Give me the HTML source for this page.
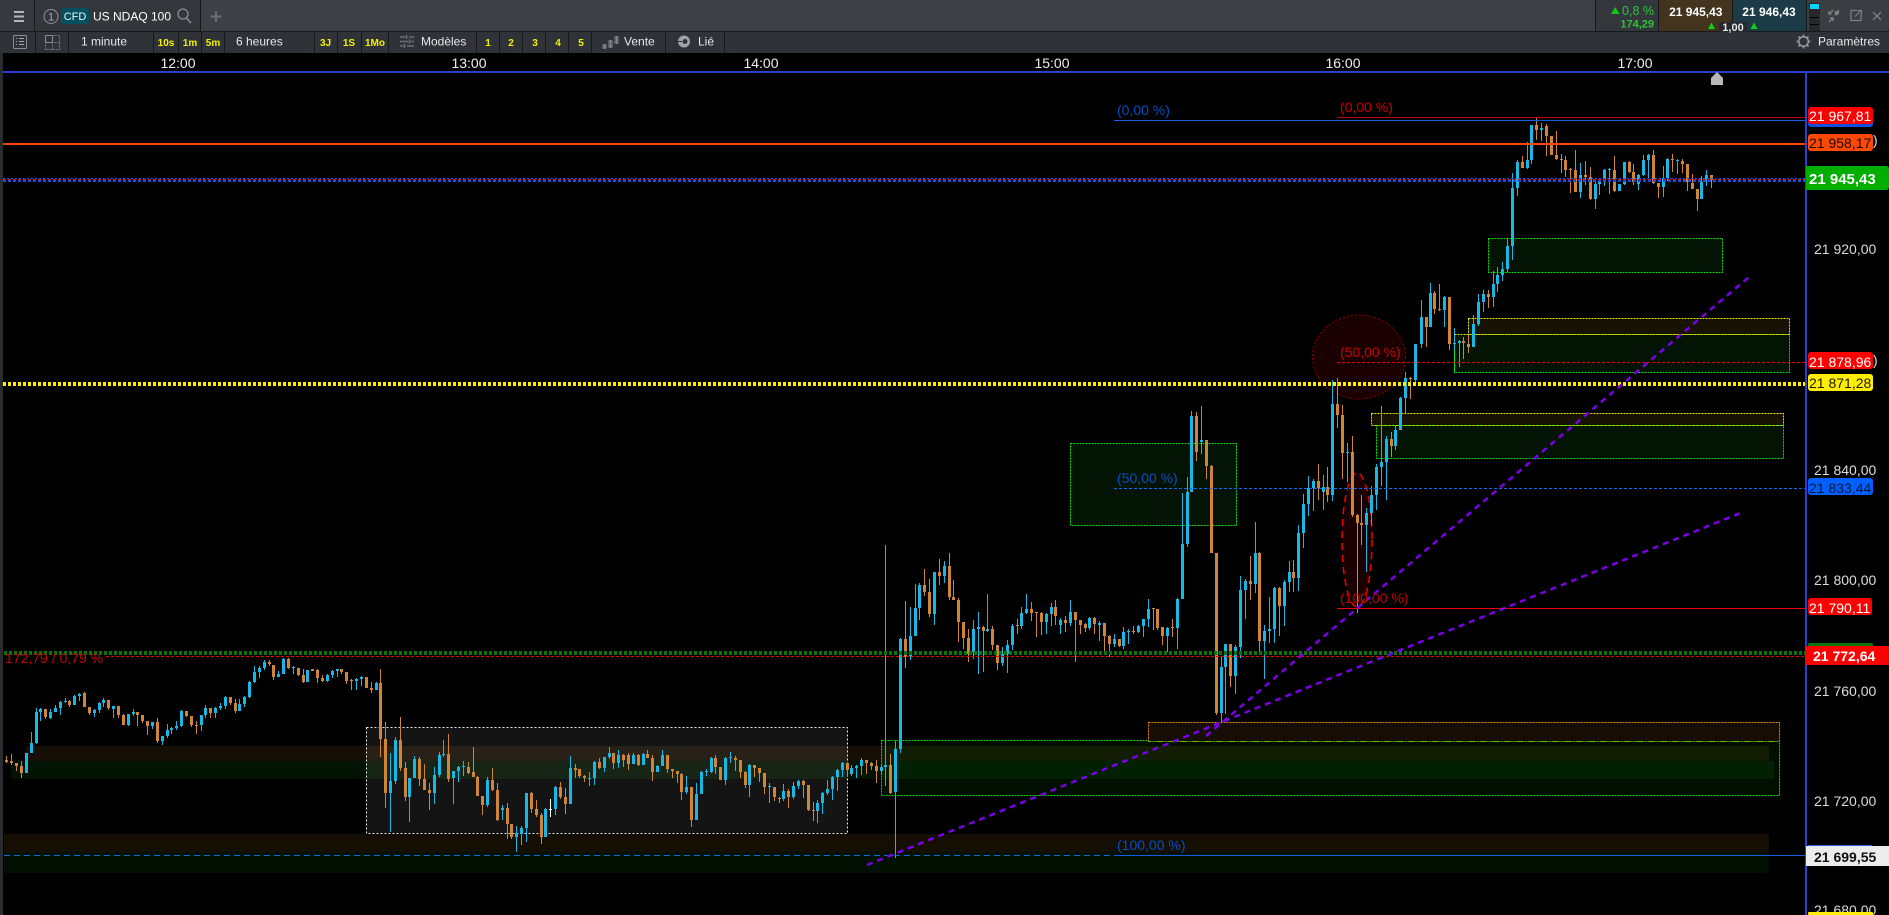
<!DOCTYPE html>
<html lang="fr"><head><meta charset="utf-8"><title>US NDAQ 100</title>
<style>
html,body{margin:0;padding:0;background:#000;width:1889px;height:915px;overflow:hidden}
svg{display:block;position:absolute;left:0;top:0}
text{font-family:"Liberation Sans",sans-serif}
.t{fill:#e6e8ea;font-size:12px}
.y{fill:#f5f000;font-size:10px;font-weight:bold;text-anchor:middle}
.h{fill:#f0f0f0;font-size:14px;text-anchor:middle}
.p{fill:#dcdcdc;font-size:14px}
.l{font-size:14px}
.r{fill:#c80000;font-size:14px}
.b{fill:#0050c4;font-size:14px}
</style></head><body>
<svg width="1889" height="915" viewBox="0 0 1889 915" xmlns="http://www.w3.org/2000/svg">
<rect width="1889" height="915" fill="#000"/>
<!-- top row -->
<rect width="1889" height="32" fill="#3d4045"/>
<rect width="34" height="31" fill="#363a3f"/>
<rect x="35" width="165" height="31" fill="#33363b"/>
<rect x="1596" width="62" height="31" fill="#33373c"/>
<rect x="1659" width="73" height="31" fill="#43341f"/>
<rect x="1733" width="73" height="31" fill="#1b3b47"/>
<rect x="1807" width="82" height="31" fill="#3a3d42"/>
<rect x="1809" y="3" width="11" height="28" fill="#26282c"/>
<rect x="1810" y="4" width="9" height="5" fill="#00d8ff"/>
<path d="M1810 17.500h9M1810 24.500h9" stroke="#000" stroke-width="1"/>
<path d="M34.500 0V31M200.500 0V31M1595.500 0V31M1658.500 0V31M1732.500 0V31M1806.500 0V31" stroke="#17191b"/>
<rect y="31" width="1889" height="1" fill="#17191b"/>
<!-- row 2 -->
<rect y="32" width="1889" height="21" fill="#2f3338"/>
<path d="M35.500 32V53M68.500 32V53M153.500 32V53M178.500 32V53M201.500 32V53M224.500 32V53M314.500 32V53M337.500 32V53M361.500 32V53M388.500 32V53M476.500 32V53M499.500 32V53M522.500 32V53M545.500 32V53M568.500 32V53M591.500 32V53M665.500 32V53M724.500 32V53" stroke="#17191b"/>
<!-- top icons -->
<path d="M14 12h10M14 16.500h10M14 21h10" stroke="#b4b6b8" stroke-width="2"/>
<circle cx="51" cy="16.500" r="7" fill="none" stroke="#8f9294" stroke-width="1"/>
<text x="51" y="20.500" font-size="11" fill="#a8aaac" text-anchor="middle">1</text>
<rect x="61" y="8" width="28" height="16" rx="3" fill="#04505c"/>
<text x="75" y="20" font-size="11" fill="#e8f4f6" text-anchor="middle">CFD</text>
<text x="93" y="20.500" fill="#fff" style="font-size:12px">US NDAQ 100</text>
<circle cx="183" cy="14" r="5" fill="none" stroke="#8a8c8e" stroke-width="1.300"/>
<path d="M186.500 18l4.500 5" stroke="#8a8c8e" stroke-width="1.500"/>
<path d="M216 11v11M210.500 16.500h11" stroke="#6c6f72" stroke-width="2"/>
<!-- row2 icons -->
<rect x="13.500" y="35.500" width="13" height="13" rx="1" fill="none" stroke="#8b8e91"/>
<path d="M16 38.500h1M16 41.500h1M16 44.500h1M19 38.500h5M19 41.500h5M19 44.500h5" stroke="#a0a3a5"/>
<path d="M45.500 35.500h14v14h-14zM52.500 35.500v14M45.500 42.500h14" fill="none" stroke="#74777a" stroke-dasharray="2 1"/>
<path d="M45.500 35.500h7v7h-7z" fill="none" stroke="#8b8e91"/>
<path d="M400 37h5M409 37h5M400 41.500h8M411 41.500h3M400 46h3M407 46h7M406.500 35v4M409.500 39.500v4M404.500 44v4" stroke="#6f7275" stroke-width="1.500" fill="none"/>
<path d="M604.500 44v5M610.500 40v8M616.500 36v8" stroke="#8a8d90"/>
<rect x="603" y="45" width="3" height="3" fill="none" stroke="#8a8d90"/>
<rect x="609" y="41" width="3" height="6" fill="none" stroke="#8a8d90"/>
<rect x="615" y="37" width="3" height="6" fill="none" stroke="#8a8d90"/>
<circle cx="684" cy="41.500" r="6" fill="#a0a3a5"/>
<circle cx="685" cy="41.500" r="2.500" fill="#2f3338"/>
<path d="M677 41.500h5" stroke="#2f3338" stroke-width="1"/>
<!-- toolbar text -->
<text x="81" y="45.500" class="t">1 minute</text>
<text x="236" y="45.500" class="t">6 heures</text>
<text x="421" y="45.500" class="t">Modèles</text>
<text x="624" y="45.500" class="t">Vente</text>
<text x="698" y="45.500" class="t">Lié</text>
<text x="166" y="46" class="y">10s</text><text x="190" y="46" class="y">1m</text><text x="213" y="46" class="y">5m</text>
<text x="325.500" y="46" class="y">3J</text><text x="349" y="46" class="y">1S</text><text x="375" y="46" class="y">1Mo</text>
<text x="488" y="46" class="y">1</text><text x="511" y="46" class="y">2</text><text x="535" y="46" class="y">3</text><text x="558" y="46" class="y">4</text><text x="581" y="46" class="y">5</text>
<!-- right of toolbar -->
<circle cx="1803.500" cy="41.500" r="4.800" fill="none" stroke="#9a9da0" stroke-width="1.500"/>
<path d="M1803.500 34.500v2M1803.500 46.500v2M1796.500 41.500h2M1808.500 41.500h2M1798.500 36.500l1.500 1.500M1807 45l1.500 1.500M1808.500 36.500l-1.500 1.500M1800 45l-1.500 1.500" stroke="#9a9da0" stroke-width="1.500"/>
<text x="1818" y="45.500" class="t">Paramètres</text>
<path d="M1611 14l4.300-7 4.300 7z" fill="#17c417"/>
<text x="1654" y="15" fill="#2ec43a" text-anchor="end" style="font-size:12.500px">0,8 %</text>
<text x="1654" y="27.500" fill="#2ec43a" text-anchor="end" style="font-weight:bold;font-size:11px">174,29</text>
<text x="1695.800" y="16" fill="#fff" font-size="12" font-weight="bold" text-anchor="middle">21 945,43</text>
<text x="1769" y="16" fill="#fff" font-size="12" font-weight="bold" text-anchor="middle">21 946,43</text>
<path d="M1708 29l3.500-6.500 3.500 6.500zM1750.500 29l3.500-6.500 3.500 6.500z" fill="#12d012"/>
<path d="M1719 32V23q0-1 1-1h26q1 0 1 1v9z" fill="#25282c"/>
<text x="1733" y="31" fill="#e8e8e8" font-size="11" font-weight="bold" text-anchor="middle">1,00</text>
<path d="M1829 14l4-4m-4 1.500v2.500h2.500M1839 10l-4 4m3.500 0h-3v-3M1829 22l4-4m-3 0h3v3M1839 12l-3.500 3.500" fill="none" stroke="#7d8083" stroke-width="1.500"/>
<path d="M1861 14v6.500h-10v-10h6M1855 16.500l6-6m-3.500 0h4v4" fill="none" stroke="#7d8083" stroke-width="1.200"/>
<path d="M1873 12l8 8M1881 12l-8 8" stroke="#7d8083" stroke-width="1.300"/>
<!-- time axis -->
<text x="178" y="68" class="h">12:00</text><text x="469" y="68" class="h">13:00</text><text x="761" y="68" class="h">14:00</text>
<text x="1052" y="68" class="h">15:00</text><text x="1343" y="68" class="h">16:00</text><text x="1635" y="68" class="h">17:00</text>
<rect y="53" width="3" height="862" fill="#2b2c30"/>
<!-- bands -->
<rect x="26" y="746" width="1743" height="15" fill="#150f05"/>
<rect x="11" y="761" width="1763" height="18" fill="#031303"/>
<rect x="4" y="834" width="1765" height="18" fill="#150e03"/>
<rect x="4" y="852" width="1765" height="21" fill="#021002"/>
<!-- zones -->
<rect x="366.500" y="727.500" width="481" height="106" fill="#fff" fill-opacity=".08" stroke="#e8e8e8" stroke-dasharray="2 2"/>
<rect x="881.500" y="740.500" width="898" height="55" fill="#0f0" fill-opacity=".06"/>
<rect x="881.500" y="740.500" width="898" height="55" fill="none" stroke="#10dc10" stroke-dasharray="2 1"/>
<rect x="1148.500" y="722.500" width="631" height="19" fill="#160e04" stroke="#e88a00" stroke-dasharray="2 1"/>
<path d="M1148.500 741.500H1779.500" stroke="#10dc10" stroke-dasharray="2 2"/>
<rect x="1070.500" y="443.500" width="166" height="82" fill="#041404" stroke="#10dc10" stroke-dasharray="2 1"/>
<rect x="1488.500" y="238.500" width="234" height="34" fill="#041404" stroke="#10dc10" stroke-dasharray="2 1"/>
<rect x="1468.500" y="318.500" width="321" height="16" fill="#181204" stroke="#e6e600" stroke-dasharray="2 1"/>
<rect x="1454.500" y="334.500" width="335" height="38" fill="#041404" stroke="#10dc10" stroke-dasharray="2 1"/>
<path d="M1454.500 334.500H1789.500" stroke="#d8f000" stroke-dasharray="2 1"/>
<path d="M1454.500 334V373" stroke="#10e040"/>
<rect x="1371.500" y="413.500" width="412" height="12" fill="#181204" stroke="#e6e600" stroke-dasharray="2 1"/>
<rect x="1376.500" y="425.500" width="407" height="33" fill="#041404" stroke="#10dc10" stroke-dasharray="2 1"/>
<path d="M1376.500 425.500H1783.500" stroke="#a8f000" stroke-dasharray="2 2"/>
<ellipse cx="1359" cy="357" rx="46.500" ry="42" fill="#1a0000" stroke="#8c0000" stroke-dasharray="2 2"/>
<ellipse cx="1357" cy="540" rx="15" ry="67" fill="#1a0000" stroke="#f00000" stroke-width="1.500" stroke-dasharray="7 5"/>
<!-- candles -->
<g transform="translate(.5 0)" fill="none">
<path stroke="#cf8436" d="M6 756V763M11 754V765M16 763V771M21 761V778M45 709V719M69 700V707M84 692V707M89 707V715M108 700V710M118 706V718M123 714V725M137 712V726M142 715V723M147 721V735M157 718V743M186 711V717M191 716V727M196 721V734M210 708V718M230 697V705M235 699V713M269 660V666M273 665V680M288 658V669M298 668V676M303 669V683M312 669V671M317 669V683M322 675V682M341 669V674M346 672V684M351 679V690M366 677V688M371 682V693M380 669V757M385 722V808M400 717V771M405 762V801M419 757V786M424 764V790M429 783V810M448 734V782M468 762V774M473 747V777M477 776V796M482 796V815M492 768V791M497 783V821M507 803V839M511 824V839M531 792V813M536 800V817M541 813V844M560 782V799M565 788V814M575 764V778M579 769V778M584 775V782M599 758V769M613 753V769M623 754V767M628 753V770M638 754V766M647 750V758M652 755V781M667 755V773M672 769V778M677 771V783M681 773V800M691 787V827M715 755V774M720 767V780M735 756V771M740 760V778M745 771V788M754 765V777M759 768V782M764 773V794M774 787V801M779 797V803M788 789V808M803 780V798M808 785V811M813 802V821M847 763V776M866 760V774M871 762V770M876 760V783M890 754V794M905 601V668M924 569V596M929 579V617M939 559V585M949 553V600M953 580V600M958 598V642M963 622V649M968 629V662M983 626V672M992 626V650M997 645V670M1017 619V634M1031 602V621M1036 612V637M1041 612V635M1055 600V625M1065 616V632M1075 612V662M1080 620V634M1085 623V632M1094 617V634M1104 623V651M1109 635V657M1119 639V647M1133 626V634M1153 608V630M1157 609V630M1162 627V645M1172 619V637M1196 412V461M1206 440V479M1211 465V553M1216 553V715M1230 644V687M1250 556V600M1259 552V655M1279 587V636M1293 560V592M1318 464V500M1327 467V502M1337 378V428M1342 405V479M1352 436V517M1357 514V613M1361 495V545M1391 432V457M1410 377V399M1426 317V347M1434 291V314M1439 284V311M1449 297V350M1463 337V359M1468 334V353M1488 290V308M1522 156V168M1536 118V140M1546 124V156M1551 136V155M1556 131V160M1561 154V173M1565 156V177M1570 168V193M1575 150V192M1585 161V185M1590 167V200M1614 156V192M1629 161V173M1633 164V185M1653 150V184M1658 183V198M1672 154V172M1682 159V173M1687 164V191M1692 174V189M1697 189V211M1711 175V188"/>
<path stroke="#cf8436" stroke-width="3" d="M6 760V762M11 761V763M16 763V766M21 766V773M45 709V717M69 701V705M84 693V707M89 707V713M108 700V708M118 706V715M123 715V725M137 712V715M142 715V721M147 721V726M157 722V741M186 711V716M191 716V725M196 725V726M210 708V713M230 697V703M235 703V711M269 662V664M273 665V677M288 659V668M298 668V675M303 675V682M312 669V671M317 670V678M322 678V681M341 669V672M346 672V681M351 680V681M366 677V688M371 688V690M380 683V739M385 739V793M400 740V768M405 768V797M419 759V779M424 779V790M429 790V793M448 754V779M468 767V773M473 772V777M477 777V796M482 796V805M492 780V790M497 790V820M507 808V824M511 824V837M531 793V809M536 809V815M541 815V837M560 787V797M565 797V804M575 768V770M579 769V776M584 776V778M599 762V768M613 753V763M623 755V760M628 755V764M638 755V765M647 754V758M652 758V772M667 755V769M672 769V771M677 771V774M681 774V792M691 787V820M715 758V767M720 767V780M735 758V760M740 760V772M745 772V785M754 765V768M759 768V773M764 773V787M774 787V797M779 798V799M788 791V797M803 781V785M808 785V810M813 810V811M847 763V770M866 760V763M871 763V766M876 766V771M890 765V793M905 639V657M924 585V592M929 592V614M939 572V576M949 566V597M953 597V600M958 600V622M963 622V638M968 638V654M983 627V631M992 629V645M997 645V663M1017 625V626M1031 609V613M1036 612V613M1041 613V622M1055 607V616M1065 620V623M1075 612V620M1080 620V625M1085 624V628M1094 618V624M1104 623V636M1109 636V644M1119 639V646M1133 631V632M1153 608V609M1157 609V628M1162 627V636M1172 627V628M1196 416V452M1206 440V466M1211 466V553M1216 553V713M1230 644V676M1250 581V584M1259 553V641M1279 588V606M1293 572V578M1318 481V488M1327 487V495M1337 404V415M1342 415V453M1352 452V515M1357 515V523M1361 523V525M1391 439V446M1410 378V379M1426 317V327M1434 293V309M1439 309V310M1449 297V344M1463 341V343M1468 344V347M1488 294V297M1522 162V168M1536 125V130M1546 126V136M1551 136V155M1556 155V159M1561 159V160M1565 160V170M1570 169V170M1575 170V192M1585 175V177M1590 177V199M1614 170V191M1629 162V172M1633 172V182M1653 155V183M1658 183V187M1672 159V160M1682 161V164M1687 164V182M1692 183V189M1697 189V199M1711 175V180"/>
<path stroke="#18b8e6" d="M26 753V773M31 732V753M36 708V744M40 708V721M50 709V719M55 705V712M60 701V715M65 698V703M74 695V705M79 693V701M94 709V717M99 702V713M103 698V707M113 706V718M128 714V726M133 709V716M152 722V729M162 736V745M167 724V738M171 727V734M176 721V730M181 710V727M201 715V731M205 705V718M215 707V718M220 703V710M225 696V709M239 699V711M244 696V707M249 681V698M254 666V683M259 666V678M264 660V670M278 671V677M283 658V674M293 666V674M307 670V682M327 674V682M332 670V678M337 669V677M356 678V690M361 676V686M376 682V690M390 753V832M395 737V784M409 778V822M414 756V778M434 767V804M439 752V777M443 740V757M453 771V804M458 766V782M463 761V776M487 777V807M502 805V820M516 826V852M521 826V845M526 793V842M545 808V837M555 786V815M570 756V804M589 772V786M594 761V785M604 757V772M609 747V759M618 750V768M633 753V764M643 753V765M657 765V772M662 750V766M686 776V794M696 783V820M701 771V794M706 769V776M711 757V773M725 757V785M730 752V763M749 764V797M769 783V803M783 784V801M793 782V799M798 780V789M817 800V823M822 792V814M827 780V795M832 776V800M837 769V791M842 762V777M851 765V776M856 765V778M861 758V775M881 765V775M885 545V786M895 741V858M900 638V753M910 607V660M915 584V636M919 583V620M934 572V625M944 561V583M973 620V659M978 612V674M987 594V632M1002 647V666M1007 640V673M1012 624V650M1021 607V629M1026 594V614M1046 613V634M1051 603V626M1060 618V634M1070 600V626M1089 617V630M1099 621V641M1114 634V647M1123 627V649M1128 629V644M1138 625V633M1143 619V637M1148 599V627M1167 627V652M1177 598V649M1182 493V599M1187 477V547M1191 411V492M1201 406V454M1221 657V722M1225 644V714M1235 645V694M1240 576V658M1245 579V619M1255 522V593M1264 625V679M1269 597V643M1274 587V643M1284 580V626M1289 561V592M1298 525V591M1303 494V548M1308 476V516M1313 479V511M1323 475V510M1332 380V501M1347 443V482M1366 508V572M1371 486V525M1376 464V510M1381 406V486M1386 436V500M1395 425V450M1400 397V430M1405 372V413M1415 344V386M1421 300V348M1430 283V327M1444 296V327M1454 328V350M1459 340V367M1473 315V347M1478 294V326M1483 290V312M1493 271V307M1497 267V292M1502 262V281M1507 238V272M1512 173V260M1517 160V196M1527 142V169M1531 125V164M1541 123V141M1580 163V198M1595 182V209M1599 180V195M1604 169V186M1609 168V194M1619 184V191M1624 162V185M1638 174V190M1643 155V176M1648 154V178M1663 166V197M1667 158V181M1677 159V174M1701 176V199M1706 170V186"/>
<path stroke="#18b8e6" stroke-width="3" d="M26 753V773M31 743V753M36 712V743M40 709V712M50 712V718M55 708V712M60 702V708M65 701V702M74 696V705M79 694V696M94 710V713M99 703V710M103 700V703M113 706V709M128 714V725M133 712V714M152 722V726M162 736V741M167 730V736M171 728V730M176 726V728M181 711V726M201 715V725M205 708V715M215 708V713M220 706V708M225 697V706M239 704V711M244 697V704M249 682V697M254 672V682M259 668V672M264 662V668M278 674V677M283 659V674M293 667V668M307 670V682M327 675V681M332 671V675M337 669V671M356 679V681M361 677V679M376 683V690M390 781V793M395 740V781M409 778V797M414 759V778M434 775V793M439 755V775M443 754V755M453 771V778M458 767V771M463 766V767M487 780V805M502 808V810M516 833V837M521 828V834M526 793V828M545 809V837M555 787V809M570 768V804M589 778V779M594 762V778M604 757V768M609 753V757M618 755V763M633 755V764M643 754V765M657 766V772M662 755V766M686 787V792M696 794V820M701 772V794M706 771V772M711 758V772M725 758V780M730 757V758M749 765V785M769 786V787M783 791V799M793 786V797M798 781V786M817 803V811M822 793V803M827 789V793M832 777V789M837 770V777M842 763V770M851 768V774M856 766V768M861 760V766M881 767V771M885 765V767M895 749V792M900 639V749M910 636V656M915 608V636M919 585V608M934 572V614M944 566V576M973 629V652M978 627V629M987 629V631M1002 654V663M1007 645V654M1012 626V645M1021 613V626M1026 609V613M1046 614V622M1051 607V614M1060 620V625M1070 612V623M1089 618V628M1099 623V625M1114 639V644M1123 632V646M1128 631V632M1138 626V632M1143 619V626M1148 609V619M1167 628V636M1177 599V628M1182 544V599M1187 492V544M1191 416V492M1201 440V442M1221 667V713M1225 644V667M1235 647V676M1240 590V647M1245 581V590M1255 553V584M1264 631V641M1269 629V631M1274 588V629M1284 582V606M1289 572V582M1298 533V578M1303 504V533M1308 488V504M1313 481V488M1323 487V492M1332 404V495M1347 452V453M1366 513V525M1371 495V513M1376 467V495M1381 462V467M1386 439V462M1395 430V446M1400 398V430M1405 378V398M1415 344V380M1421 317V344M1430 293V327M1444 297V310M1454 343V344M1459 341V343M1473 324V347M1478 302V324M1483 294V302M1493 284V297M1497 275V284M1502 269V275M1507 246V269M1512 188V246M1517 162V188M1527 160V168M1531 125V160M1541 128V130M1580 175V192M1595 184V199M1599 181V184M1604 170V181M1609 169V170M1619 184V191M1624 162V184M1638 175V184M1643 160V175M1648 155V160M1663 178V187M1667 159V178M1677 160V161M1701 182V199M1706 175V179"/>
<path stroke="#fff" d="M550 799V817"/><path stroke="#fff" stroke-width="3" d="M550 809V810"/>
</g>
<!-- horizontal lines -->
<path d="M1337 117.500H1806" stroke="#c00000"/>
<path d="M1114 120.500H1806" stroke="#0f5fe0"/>
<rect x="3" y="143" width="1803" height="2" fill="#ff4500"/>
<path d="M3 178.500H1806" stroke="#1a50e8" stroke-dasharray="2 2"/>
<path d="M3 179.500H1806" stroke="#d01020" stroke-dasharray="3 2"/>
<path d="M3 181H1806" stroke="#1a4ce0" stroke-width="2" stroke-dasharray="3 2"/>
<path d="M3 384H1806" stroke="#ffee00" stroke-width="4" stroke-dasharray="3 2"/>
<path d="M1337 362.500H1806" stroke="#f00000" stroke-dasharray="3 2"/>
<path d="M1114 488.500H1806" stroke="#0a6cff" stroke-dasharray="3 2"/>
<path d="M1337 608.500H1806" stroke="#f00000"/>
<path d="M4 653H1806" stroke="#0a760a" stroke-width="4" stroke-dasharray="3 2"/>
<path d="M106 656.500H1806" stroke="#f00000" stroke-dasharray="3 2"/>
<path d="M4 855.500H1114" stroke="#0a6cd8" stroke-dasharray="6 4"/>
<path d="M1114 855.500H1806" stroke="#0f5fe0"/>
<!-- purple -->
<path d="M867 865L1743 512M1206 736L1749 277" stroke="#7a00e6" stroke-width="2.500" stroke-dasharray="6 5" fill="none"/>
<!-- labels -->
<text x="5" y="663" class="r">172,79 / 0,79 %</text>
<text x="1117" y="115" class="b">(0,00 %)</text>
<text x="1340" y="112" class="r">(0,00 %)</text>
<text x="1340" y="357" class="r">(50,00 %)</text>
<text x="1117" y="483" class="b">(50,00 %)</text>
<text x="1340" y="603" class="r">(100,00 %)</text>
<text x="1117" y="850" class="b">(100,00 %)</text>
<!-- axis -->
<rect y="71" x="3" width="1886" height="2" fill="#2a3fd6"/>
<rect x="1805" y="72" width="2" height="843" fill="#2a3fd6"/>
<path d="M1717 72l6 6v7h-12v-7z" fill="#b8b8b8"/>
<!-- price labels -->
<text x="1873" y="145" fill="#ddd" font-size="14">)</text>
<text x="1873" y="365" fill="#ddd" font-size="14">)</text>
<rect x="1808" y="109" width="65" height="18" rx="3" fill="#0f4fe0"/>
<rect x="1808" y="107" width="65" height="17" rx="3" fill="#ff0000"/>
<text x="1809" y="121" fill="#fff" font-size="14">21 967,81</text>
<rect x="1808" y="134" width="65" height="17" rx="3" fill="#ff4800"/>
<text x="1809" y="148" fill="#1a0a00" font-size="14">21 958,17</text>
<rect x="1806" y="166" width="83" height="24" rx="3" fill="#00ae00"/>
<rect x="1806" y="166" width="4" height="24" fill="#00ae00"/>
<text x="1809" y="184" fill="#fff" font-size="15" font-weight="bold">21 945,43</text>
<text x="1814" y="254" class="p">21 920,00</text>
<rect x="1808" y="352" width="65" height="17" rx="3" fill="#ff0000"/>
<text x="1809" y="367" fill="#fff" font-size="14">21 878,96</text>
<rect x="1808" y="374" width="65" height="17" rx="3" fill="#ffee00"/>
<text x="1809" y="388" fill="#1a1a00" font-size="14">21 871,28</text>
<text x="1814" y="475" class="p">21 840,00</text>
<rect x="1808" y="478" width="65" height="17" rx="3" fill="#0060ff"/>
<text x="1809" y="493" fill="#00183c" font-size="14">21 833,44</text>
<text x="1814" y="585" class="p">21 800,00</text>
<rect x="1808" y="598" width="64" height="17" rx="3" fill="#ff0000"/>
<text x="1809" y="613" fill="#fff" font-size="14">21 790,11</text>
<rect x="1808" y="643" width="65" height="6" rx="2" fill="#0a760a"/>
<rect x="1806" y="646" width="83" height="19" fill="#ff0000"/>
<text x="1813" y="661" fill="#fff" font-size="14" font-weight="bold">21 772,64</text>
<text x="1814" y="696" class="p">21 760,00</text>
<text x="1814" y="806" class="p">21 720,00</text>
<rect x="1808" y="845" width="64" height="3" fill="#2a5fe0"/>
<rect x="1806" y="846" width="83" height="20" fill="#ececec"/>
<text x="1814" y="862" fill="#111" font-size="14" font-weight="bold">21 699,55</text>
<text x="1814" y="915" class="p">21 680,00</text>
<rect x="1808" y="912" width="65" height="3" rx="1" fill="#ffee00"/>
</svg>
</body></html>
